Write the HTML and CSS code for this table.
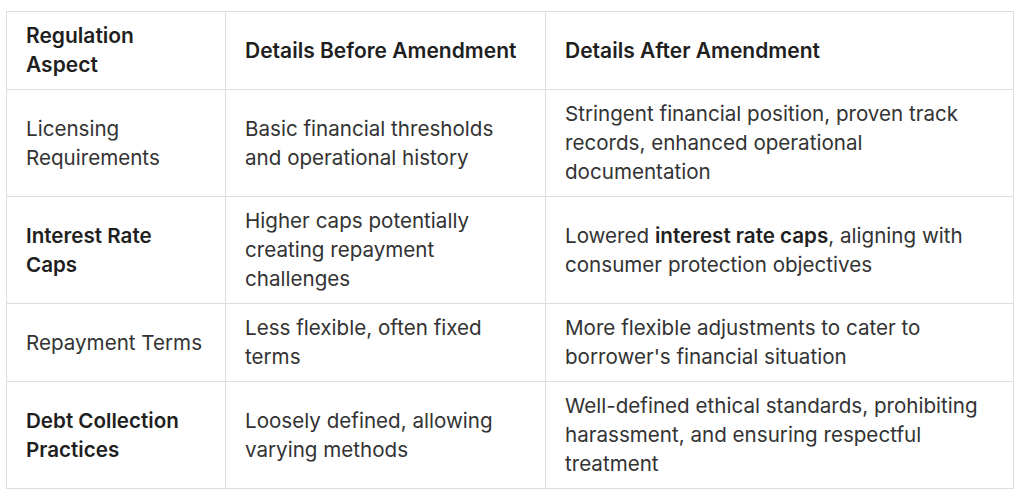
FILE: index.html
```html
<!DOCTYPE html>
<html>
<head>
<meta charset="utf-8">
<link rel="stylesheet" href="styles.css">
</head>
<body>
<div class="wrap">
<table class="reg-table">
  <colgroup>
    <col class="c1"><col class="c2"><col class="c3">
  </colgroup>
  <thead>
    <tr>
      <th>Regulation Aspect</th>
      <th>Details Before Amendment</th>
      <th>Details After Amendment</th>
    </tr>
  </thead>
  <tbody>
    <tr>
      <td>Licensing Requirements</td>
      <td>Basic financial thresholds and operational history</td>
      <td>Stringent financial position, proven track records, enhanced operational documentation</td>
    </tr>
    <tr>
      <td><strong>Interest Rate Caps</strong></td>
      <td>Higher caps potentially creating repayment challenges</td>
      <td>Lowered <strong>interest rate caps</strong>, aligning with consumer protection objectives</td>
    </tr>
    <tr>
      <td>Repayment Terms</td>
      <td>Less flexible, often fixed terms</td>
      <td>More flexible adjustments to cater to borrower's financial situation</td>
    </tr>
    <tr>
      <td><strong>Debt Collection Practices</strong></td>
      <td>Loosely defined, allowing varying methods</td>
      <td>Well-defined ethical standards, prohibiting harassment, and ensuring respectful treatment</td>
    </tr>
  </tbody>
</table>
</div>
</body>
</html>
```
FILE: styles.css
```css
html, body {
  margin: 0;
  padding: 0;
  background: #fff;
}
.wrap {
  padding: 11px 0 0 6px;
}
.reg-table {
  border-collapse: collapse;
  width: 1007px;
  table-layout: fixed;
  font-family: Inter, "Liberation Sans", sans-serif;
  font-size: 20.6px;
  line-height: 29px;
  color: #333;
}
.c1 { width: 219px; }
.c2 { width: 320px; }
.c3 { width: 468px; }
.reg-table th,
.reg-table td {
  border: 1px solid #dedede;
  padding: 9px 19px 10px;
  text-align: left;
  vertical-align: middle;
}
.reg-table th {
  font-size: 21px;
  font-weight: 600;
  color: #1f1f1f;
}
.reg-table strong {
  font-weight: 600;
  color: #1f1f1f;
}
```
